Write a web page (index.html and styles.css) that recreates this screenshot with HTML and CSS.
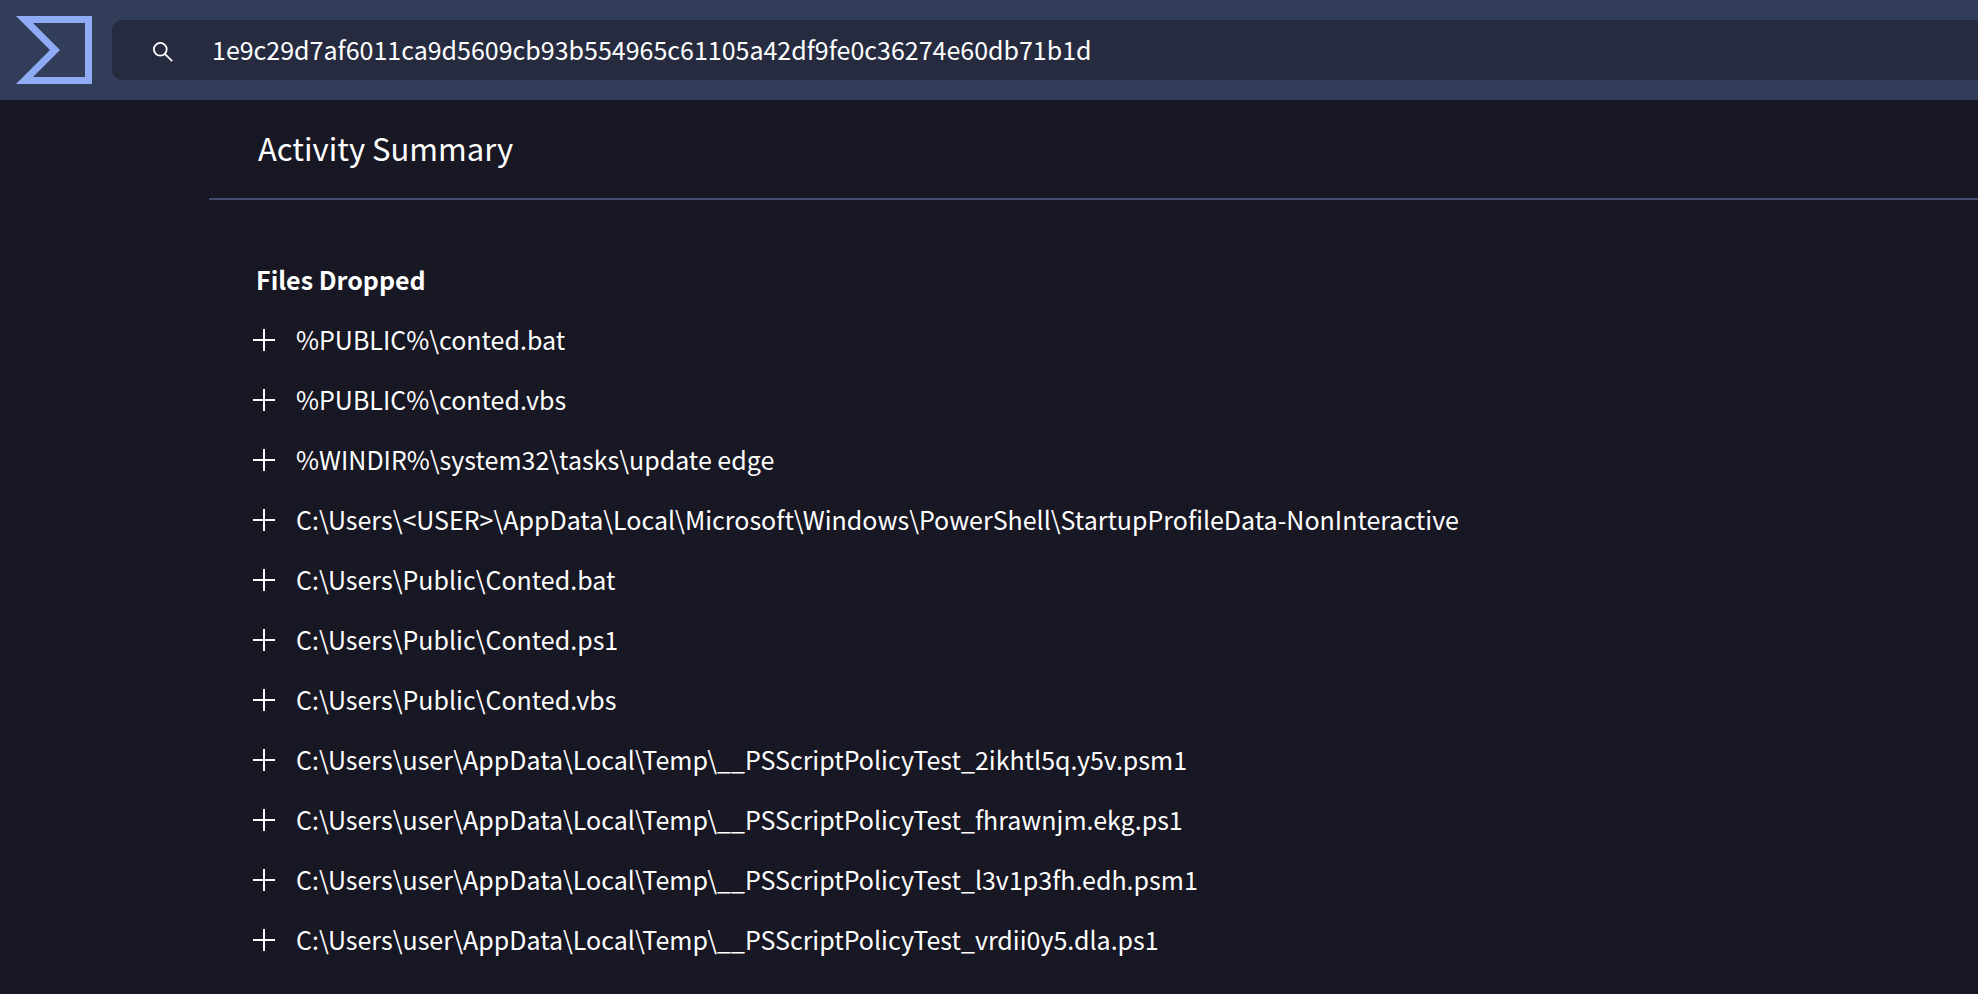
FILE: index.html
```html
<!DOCTYPE html>
<html lang="en">
<head>
  <meta charset="UTF-8" />
  <meta name="viewport" content="width=device-width, initial-scale=1.0"/>
  <title>Activity Summary</title>
  <link rel="stylesheet" href="styles.css">
</head>
<body>
  <header class="topbar">
    <a class="logo" href="#" aria-label="Home">
      <svg width="76" height="68" viewBox="0 0 76 68">
        <path fill="#8fabf6" fill-rule="evenodd" d="M0 0H76V68H0L34 34ZM17 7L44 34L17 61H69V7Z"/>
      </svg>
    </a>
    <form class="search">
      <button class="search-btn" type="submit" aria-label="Search">
        <svg width="20" height="20" viewBox="0 0 20 20" fill="none" stroke="#fff" stroke-width="1.8">
          <circle cx="7.3" cy="7.3" r="6.4"/>
          <path d="M11.8 11.8L19.2 19.2"/>
        </svg>
      </button>
      <input class="search-input" type="text" aria-label="Search term" spellcheck="false" value="1e9c29d7af6011ca9d5609cb93b554965c61105a42df9fe0c36274e60db71b1d">
    </form>
  </header>

  <main class="content">
    <h1>Activity Summary</h1>

    <section class="files">
      <h2>Files Dropped</h2>
      <ul class="file-list">
        <li><button class="file" type="button"><span class="plus"></span>%PUBLIC%\conted.bat</button></li>
        <li><button class="file" type="button"><span class="plus"></span>%PUBLIC%\conted.vbs</button></li>
        <li><button class="file" type="button"><span class="plus"></span>%WINDIR%\system32\tasks\update edge</button></li>
        <li><button class="file" type="button"><span class="plus"></span>C:\Users\&lt;USER&gt;\AppData\Local\Microsoft\Windows\PowerShell\StartupProfileData-NonInteractive</button></li>
        <li><button class="file" type="button"><span class="plus"></span>C:\Users\Public\Conted.bat</button></li>
        <li><button class="file" type="button"><span class="plus"></span>C:\Users\Public\Conted.ps1</button></li>
        <li><button class="file" type="button"><span class="plus"></span>C:\Users\Public\Conted.vbs</button></li>
        <li><button class="file" type="button"><span class="plus"></span>C:\Users\user\AppData\Local\Temp\__PSScriptPolicyTest_2ikhtl5q.y5v.psm1</button></li>
        <li><button class="file" type="button"><span class="plus"></span>C:\Users\user\AppData\Local\Temp\__PSScriptPolicyTest_fhrawnjm.ekg.ps1</button></li>
        <li><button class="file" type="button"><span class="plus"></span>C:\Users\user\AppData\Local\Temp\__PSScriptPolicyTest_l3v1p3fh.edh.psm1</button></li>
        <li><button class="file" type="button"><span class="plus"></span>C:\Users\user\AppData\Local\Temp\__PSScriptPolicyTest_vrdii0y5.dla.ps1</button></li>
      </ul>
    </section>
  </main>
</body>
</html>
```
FILE: styles.css
```css
* {
  box-sizing: border-box;
}

body {
  margin: 0;
  font-family: "Noto Sans CJK SC", "Noto Sans", sans-serif;
  font-size: 25px;
  background-color: #181724;
  color: #fff;
}

button,
input {
  font: inherit;
  color: inherit;
  background: none;
  border: 0;
  padding: 0;
}

.topbar {
  display: flex;
  align-items: center;
  gap: 20px;
  height: 100px;
  padding-left: 16px;
  background-color: #323d5a;
}

.logo,
.search-btn {
  display: flex;
}

.search {
  display: flex;
  align-items: center;
  flex: 1;
  gap: 39px;
  height: 60px;
  padding-left: 41px;
  background-color: #262b3f;
  border-radius: 10px 0 0 10px;
}

.search-btn {
  padding-top: 4px;
}

.search-input {
  flex: 1;
  min-width: 0;
  padding-bottom: 2px;
  outline: none;
}

.content {
  margin-left: 209px;
}

h1 {
  margin: 0;
  padding: 0 0 2px 49px;
  font-size: 31px;
  font-weight: 400;
  line-height: 96px;
  border-bottom: 2px solid #434c6d;
}

.files {
  padding: 49px 44px 0;
}

h2 {
  margin: 0;
  padding-left: 3px;
  font-size: 25px;
  font-weight: 700;
  line-height: 60px;
}

.file-list {
  list-style: none;
  margin: 0;
  padding: 0;
}

.file {
  display: flex;
  align-items: center;
  gap: 21px;
  line-height: 60px;
  text-align: left;
  cursor: pointer;
}

.plus {
  width: 22px;
  height: 22px;
  margin-top: 2px;
  background:
    linear-gradient(#fff, #fff) center / 22px 2px no-repeat,
    linear-gradient(#fff, #fff) center / 2px 22px no-repeat;
}
```
